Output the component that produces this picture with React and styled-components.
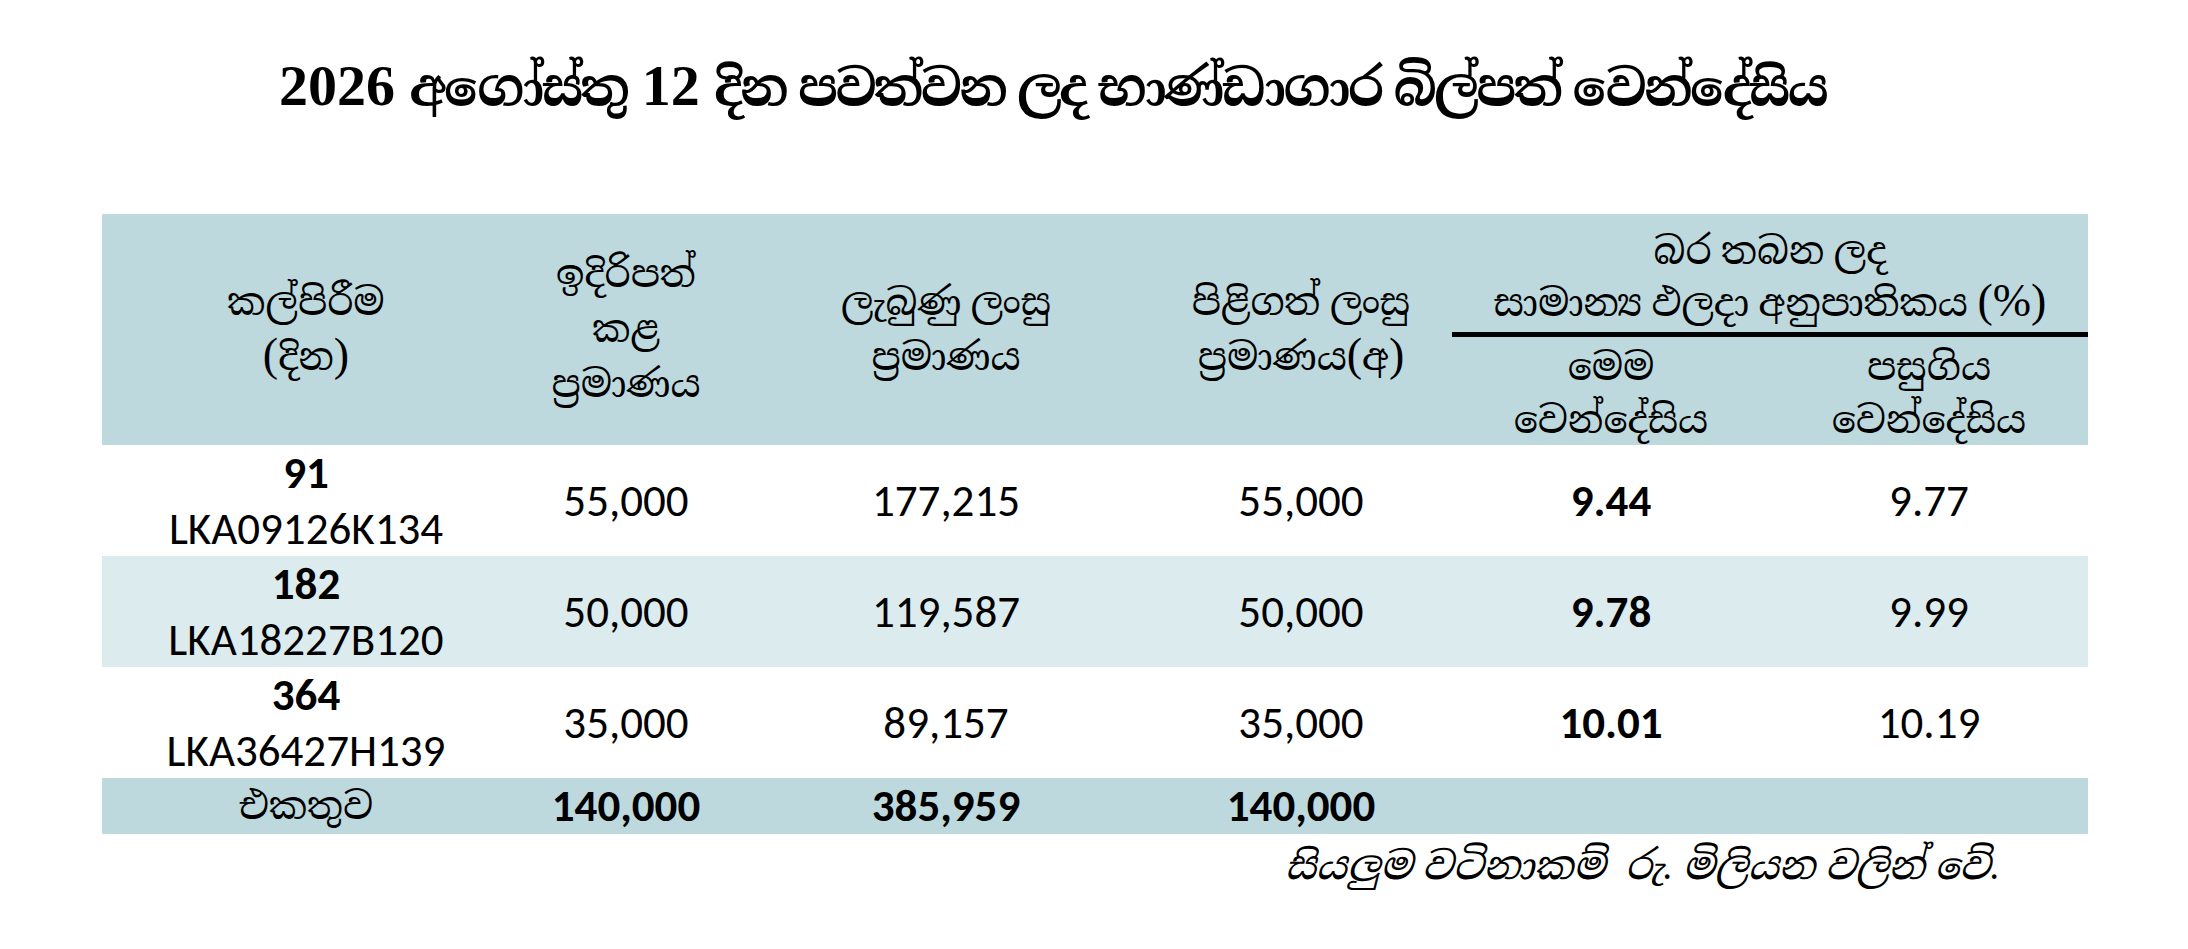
import React from 'react';
import styled, { createGlobalStyle } from 'styled-components';

const SERIF = '"Liberation Serif", "Noto Serif Sinhala", serif';
const NUM = 'Carlito, "Open Sans", sans-serif';

const Global = createGlobalStyle`
  html, body { margin: 0; background: #ffffff; }
  body { font-family: ${SERIF}; color: #000; }
`;

const Page = styled.div`
  width: 2188px;
  height: 949px;
  box-sizing: border-box;
  padding: 52px 100px 0 102px;
`;

const Title = styled.h1`
  margin: 0 0 92px 177px;
  font-family: ${SERIF};
  font-size: 58px;
  font-weight: bold;
  line-height: 68px;
  white-space: nowrap;
`;

const TitleWords = styled.span`
  font-size: 51px;
  letter-spacing: -2.6px;
  word-spacing: 2px;
`;

const Grid = styled.div`
  display: grid;
  grid-template-columns: 408px 232px 408px 302px 318px 318px;
  width: 1986px;
`;

const HeadCell = styled.div`
  grid-column: ${(p) => p.col || 'auto'};
  grid-row: ${(p) => p.row || 'auto'};
  background: #bdd9de;
  display: flex;
  flex-direction: column;
  align-items: center;
  justify-content: center;
  text-align: center;
  font-family: ${SERIF};
  font-size: 38px;
  line-height: 55px;
`;

const GroupCell = styled(HeadCell)`
  height: 123px;
  box-sizing: border-box;
  justify-content: flex-end;
  line-height: 52px;
  padding-bottom: 8px;
  position: relative;
  &::after {
    content: '';
    position: absolute;
    left: 0;
    right: 0;
    bottom: 0;
    height: 5px;
    background: #000;
  }
`;

const SubCell = styled(HeadCell)`
  height: 108px;
  box-sizing: border-box;
  padding-top: 6px;
  line-height: 53px;
`;

const Paren = styled.span`
  font-size: 46px;
  line-height: 0;
`;

const Cell = styled.div`
  background: ${(p) => (p.shade === 'dark' ? '#bdd9de' : p.shade === 'light' ? '#dcebed' : '#ffffff')};
  height: ${(p) => (p.short ? 56 : 111)}px;
  display: flex;
  flex-direction: column;
  align-items: center;
  justify-content: center;
  font-family: ${NUM};
  font-size: 45px;
  line-height: 56px;
  font-weight: ${(p) => (p.bold ? 700 : 400)};
`;

const Bold = styled.span`
  font-weight: 700;
`;

const SinhalaLabel = styled.span`
  font-family: ${SERIF};
  font-size: 38px;
  font-weight: 400;
`;

const Note = styled.p`
  margin: 4px 0 0;
  width: 1898px;
  text-align: right;
  white-space: pre;
  font-family: ${SERIF};
  font-style: italic;
  font-size: 39px;
  line-height: 56px;
`;

const rows = [
  { days: '91', code: 'LKA09126K134', offered: '55,000', received: '177,215', accepted: '55,000', now: '9.44', prev: '9.77' },
  { days: '182', code: 'LKA18227B120', offered: '50,000', received: '119,587', accepted: '50,000', now: '9.78', prev: '9.99' },
  { days: '364', code: 'LKA36427H139', offered: '35,000', received: '89,157', accepted: '35,000', now: '10.01', prev: '10.19' },
];

export default function App() {
  return (
    <>
      <Global />
      <Page>
        <Title>
          2026 <TitleWords>අගෝස්තු</TitleWords> 12{' '}
          <TitleWords>දින පවත්වන ලද භාණ්ඩාගාර බිල්පත් වෙන්දේසිය</TitleWords>
        </Title>
        <Grid>
          <HeadCell col="1" row="1 / span 2">
            <div>කල්පිරීම</div>
            <div>
              <Paren>(</Paren>දින<Paren>)</Paren>
            </div>
          </HeadCell>
          <HeadCell col="2" row="1 / span 2">
            <div>ඉදිරිපත්</div>
            <div>කළ</div>
            <div>ප්‍රමාණය</div>
          </HeadCell>
          <HeadCell col="3" row="1 / span 2">
            <div>ලැබුණු ලංසු</div>
            <div>ප්‍රමාණය</div>
          </HeadCell>
          <HeadCell col="4" row="1 / span 2">
            <div>පිළිගත් ලංසු</div>
            <div>
              ප්‍රමාණය<Paren>(</Paren>අ<Paren>)</Paren>
            </div>
          </HeadCell>
          <GroupCell col="5 / span 2" row="1">
            <div>බර තබන ලද</div>
            <div>
              සාමාන්‍ය ඵලදා අනුපාතිකය <Paren>(%)</Paren>
            </div>
          </GroupCell>
          <SubCell col="5" row="2">
            <div>මෙම</div>
            <div>වෙන්දේසිය</div>
          </SubCell>
          <SubCell col="6" row="2">
            <div>පසුගිය</div>
            <div>වෙන්දේසිය</div>
          </SubCell>

          {rows.map((r, i) => {
            const shade = i === 1 ? 'light' : 'white';
            return (
              <React.Fragment key={r.code}>
                <Cell shade={shade}>
                  <Bold>{r.days}</Bold>
                  <span>{r.code}</span>
                </Cell>
                <Cell shade={shade}>{r.offered}</Cell>
                <Cell shade={shade}>{r.received}</Cell>
                <Cell shade={shade}>{r.accepted}</Cell>
                <Cell shade={shade} bold>{r.now}</Cell>
                <Cell shade={shade}>{r.prev}</Cell>
              </React.Fragment>
            );
          })}

          <Cell shade="dark" short>
            <SinhalaLabel>එකතුව</SinhalaLabel>
          </Cell>
          <Cell shade="dark" short bold>140,000</Cell>
          <Cell shade="dark" short bold>385,959</Cell>
          <Cell shade="dark" short bold>140,000</Cell>
          <Cell shade="dark" short />
          <Cell shade="dark" short />
        </Grid>
        <Note>{'සියලුම වටිනාකම්  රු. මිලියන වලින් වේ.'}</Note>
      </Page>
    </>
  );
}
